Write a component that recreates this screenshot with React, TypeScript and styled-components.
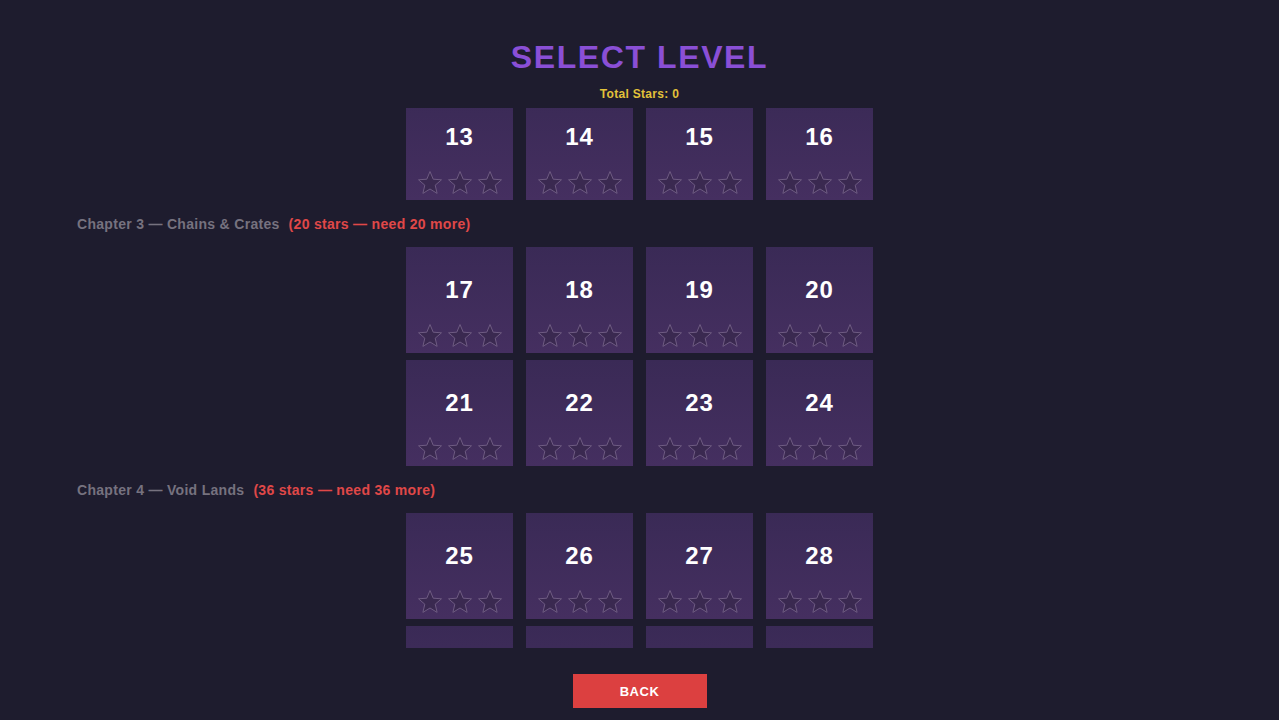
import React, { useEffect, useRef } from 'react';
import styled, { createGlobalStyle } from 'styled-components';

const GlobalStyle = createGlobalStyle`
  html, body {
    margin: 0;
    padding: 0;
    background: #1e1c2e;
    font-family: 'Liberation Sans', Arial, sans-serif;
    overflow: hidden;
  }
`;

interface Chapter {
  title: string;
  required: number;
  levels: number[];
}

const chapters: Chapter[] = [
  { title: 'Chapter 1 — First Steps', required: 0, levels: [1, 2, 3, 4, 5, 6, 7, 8] },
  { title: 'Chapter 2 — Shifting Floors', required: 8, levels: [9, 10, 11, 12, 13, 14, 15, 16] },
  { title: 'Chapter 3 — Chains & Crates', required: 20, levels: [17, 18, 19, 20, 21, 22, 23, 24] },
  { title: 'Chapter 4 — Void Lands', required: 36, levels: [25, 26, 27, 28, 29, 30, 31, 32] },
];

const totalStars = 0;

const Screen = styled.div`
  height: 720px;
  display: flex;
  flex-direction: column;
  align-items: center;
`;

const Title = styled.h1`
  margin: 38px 0 0;
  font-size: 32px;
  line-height: 38px;
  font-weight: 700;
  letter-spacing: 1.6px;
  color: #8a4fd6;
`;

const TotalStars = styled.div`
  margin-top: 11px;
  font-size: 12px;
  line-height: 14px;
  font-weight: 700;
  letter-spacing: 0.3px;
  color: #e2c23a;
`;

const ScrollArea = styled.div`
  margin-top: 7px;
  width: 100%;
  height: 540px;
  box-sizing: border-box;
  padding: 0 77px;
  overflow: hidden;
`;

const ChapterHeader = styled.div`
  padding: 17px 0 15px;
  font-size: 14px;
  line-height: 15px;
  font-weight: 700;
  letter-spacing: 0.3px;
  color: #76727f;
`;

const Requirement = styled.span`
  margin-left: 9px;
  color: #e04848;
`;

const Grid = styled.div`
  display: grid;
  grid-template-columns: repeat(4, 107px);
  column-gap: 13px;
  row-gap: 7px;
  justify-content: center;
`;

const Tile = styled.button`
  height: 106px;
  border: none;
  padding: 0;
  background: linear-gradient(180deg, #3a2a56 0%, #452f60 100%);
  display: flex;
  flex-direction: column;
  align-items: center;
  cursor: pointer;
  font-family: inherit;
`;

const LevelNumber = styled.div`
  margin-top: 30px;
  font-size: 24px;
  line-height: 26px;
  font-weight: 700;
  letter-spacing: 1px;
  color: #ffffff;
`;

const StarRow = styled.div`
  margin-top: auto;
  margin-bottom: 3px;
  display: flex;
  gap: 2px;
`;

const Footer = styled.div`
  margin-top: 26px;
`;

const BackButton = styled.button`
  width: 134px;
  height: 34px;
  border: none;
  background: #dc4040;
  color: #ffffff;
  font-family: inherit;
  font-size: 13px;
  font-weight: 700;
  letter-spacing: 0.5px;
  cursor: pointer;
`;

const Star: React.FC = () => (
  <svg width="28" height="28" viewBox="0 0 28 28">
    <path
      d="M14 2.5 L17.2 10.2 L25.5 10.8 L19.2 16.2 L21.1 24.4 L14 20 L6.9 24.4 L8.8 16.2 L2.5 10.8 L10.8 10.2 Z"
      fill="#3a2950"
      stroke="#6e5b82"
      strokeWidth="1"
      strokeLinejoin="round"
    />
  </svg>
);

const App: React.FC = () => {
  const scrollRef = useRef<HTMLDivElement>(null);

  useEffect(() => {
    if (scrollRef.current) scrollRef.current.scrollTop = 440;
  }, []);

  return (
    <Screen>
      <GlobalStyle />
      <Title>SELECT LEVEL</Title>
      <TotalStars>Total Stars: {totalStars}</TotalStars>
      <ScrollArea ref={scrollRef}>
        {chapters.map((chapter) => {
          const missing = chapter.required - totalStars;
          return (
            <section key={chapter.title}>
              <ChapterHeader>
                {chapter.title}
                {missing > 0 && (
                  <Requirement>
                    ({chapter.required} stars — need {missing} more)
                  </Requirement>
                )}
              </ChapterHeader>
              <Grid>
                {chapter.levels.map((level) => (
                  <Tile key={level}>
                    <LevelNumber>{level}</LevelNumber>
                    <StarRow>
                      <Star />
                      <Star />
                      <Star />
                    </StarRow>
                  </Tile>
                ))}
              </Grid>
            </section>
          );
        })}
      </ScrollArea>
      <Footer>
        <BackButton>BACK</BackButton>
      </Footer>
    </Screen>
  );
};

export default App;
